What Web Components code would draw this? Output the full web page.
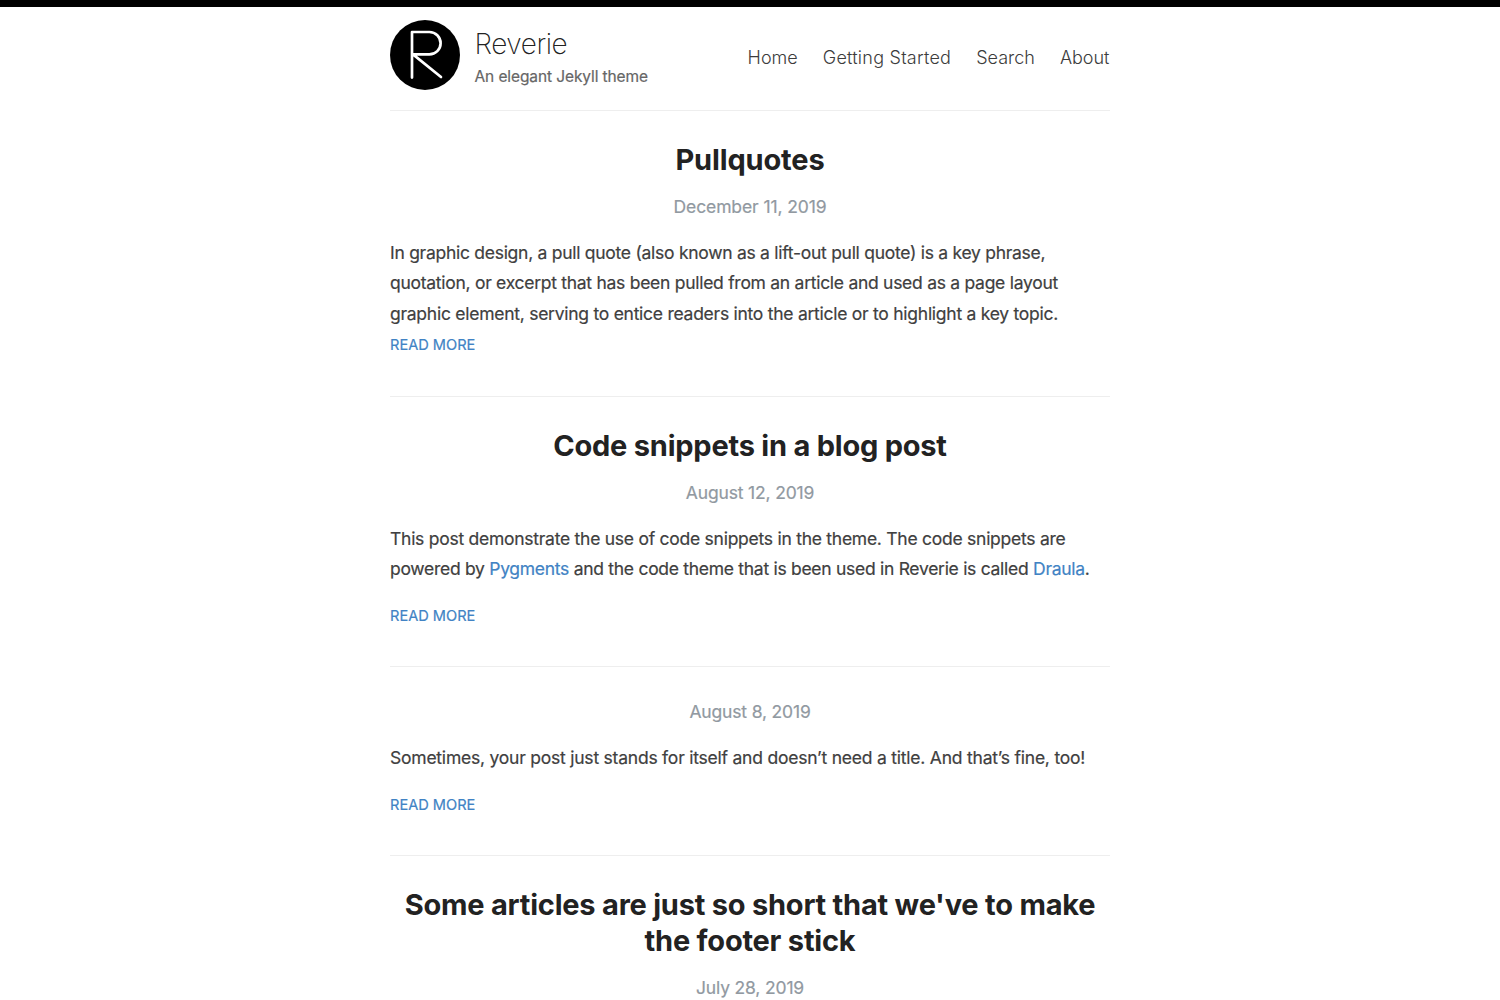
<!DOCTYPE html>
<html lang="en"><head><meta charset="utf-8"><title>Reverie</title>
<style>body{margin:0;background:#fff;font-family:Inter,sans-serif;overflow:hidden;height:1000px}
a{color:#4183c4;text-decoration:none}
.l{display:block;white-space:nowrap;letter-spacing:var(--ls)}</style></head><body>
<rv-page>
<rv-masthead slot="head" name="Reverie" tagline="An elegant Jekyll theme">
<rv-link>Home</rv-link><rv-link style="letter-spacing:.24px">Getting Started</rv-link><rv-link>Search</rv-link><rv-link>About</rv-link></rv-masthead>
<rv-post date="December 11, 2019" style="--lead:15.2px;--gap:-.5px;--end:35.5px;--date-ls:-.1px"><span slot="title"><span class="l" style="--ls:-.15px">Pullquotes</span></span>
<span class="l" style="--ls:-.274px">In graphic design, a pull quote (also known as a lift-out pull quote) is a key phrase,</span><span class="l" style="--ls:-.275px">quotation, or excerpt that has been pulled from an article and used as a page layout</span><span class="l" style="--ls:-.26px">graphic element, serving to entice readers into the article or to highlight a key topic.</span></rv-post>
<rv-post date="August 12, 2019" style="--lead:15.2px;--gap:15.7px;--end:33.8px"><span slot="title"><span class="l">Code snippets in a blog post</span></span>
<span class="l" style="--ls:-.258px">This post demonstrate the use of code snippets in the theme. The code snippets are</span><span class="l" style="--ls:-.284px">powered by <a href="#">Pygments</a> and the code theme that is been used in Reverie is called <a href="#">Draula</a>.</span></rv-post>
<rv-post date="August 8, 2019" style="--gap:15.4px;--end:34.4px"><span class="l" style="--ls:-.222px">Sometimes, your post just stands for itself and doesn’t need a title. And that’s fine, too!</span></rv-post>
<rv-post date="July 28, 2019" brief><span slot="title"><span class="l">Some articles are just so short that we've to make</span><span class="l">the footer stick</span></span></rv-post>
</rv-page>
<script>
const define = (name, render) => customElements.define(name, class extends HTMLElement {
  constructor() {
    super();
    this.attachShadow({ mode: 'open' }).innerHTML = render(this);
  }
});

define('rv-page', () => `
<style>
:host{display:block;border-top:7px solid #000;height:993px;overflow:hidden}
main{width:720px;margin:auto}
</style>
<main><slot name="head"></slot><slot></slot></main>`);

define('rv-link', () => `
<style>
:host{display:block}
a{color:#3c3c3c;font-size:18px;font-weight:300;line-height:30px;white-space:nowrap}
</style>
<a><slot></slot></a>`);

define('rv-masthead', e => `
<style>
:host{display:flex;height:90px;padding-top:13px;align-items:flex-start}
svg{width:70px;height:70px;margin-right:14.5px}
.brand{flex:1}
h1{margin:8px 0 0;font-size:28px;font-weight:200;line-height:32px;color:#222;letter-spacing:-.45px}
p{margin:5px 0 0;font-size:15.5px;line-height:24px;color:#666;-webkit-text-stroke:.2px #666;letter-spacing:-.1px}
nav{display:flex;gap:25px;margin:23px .5px 0 0}
</style>
<svg viewBox="0 0 70 70"><circle cx="35" cy="35" r="35"/><path d="M22 57.6V12H39.4A11.2 11.2 0 0 1 39.4 34.4H23L51 57" fill="none" stroke="#fff" stroke-width="2.7" stroke-linecap="round" stroke-linejoin="round"/></svg>
<div class="brand"><h1>${e.getAttribute('name')}</h1><p>${e.getAttribute('tagline')}</p></div>
<nav><slot></slot></nav>`);

define('rv-post', e => `
<style>
:host{display:block;border-top:1px solid #eee;padding:30px 0 var(--end,35.4px)}
h2{margin:1px 0 14px;font-size:29px;line-height:36px;font-weight:700;color:#222;text-align:center;letter-spacing:-.22px}
time{display:block;text-align:center;color:#9199a1;letter-spacing:var(--date-ls,-.16px)}
time,.text{font-size:17.5px;line-height:30.6px;-webkit-text-stroke:.2px}
.text{color:#404040;margin-top:var(--lead,15.5px)}
.more{display:block;margin-top:var(--gap,0);padding-top:.8px;color:#4183c4;font-size:14.6px;line-height:30.6px;-webkit-text-stroke:.2px}
</style>
${e.querySelector('[slot=title]') ? '<h2><slot name="title"></slot></h2>' : ''}
<time>${e.getAttribute('date')}</time>
${e.hasAttribute('brief') ? '' : '<div class="text"><slot></slot></div><a class="more">READ MORE</a>'}`);
</script></body></html>
